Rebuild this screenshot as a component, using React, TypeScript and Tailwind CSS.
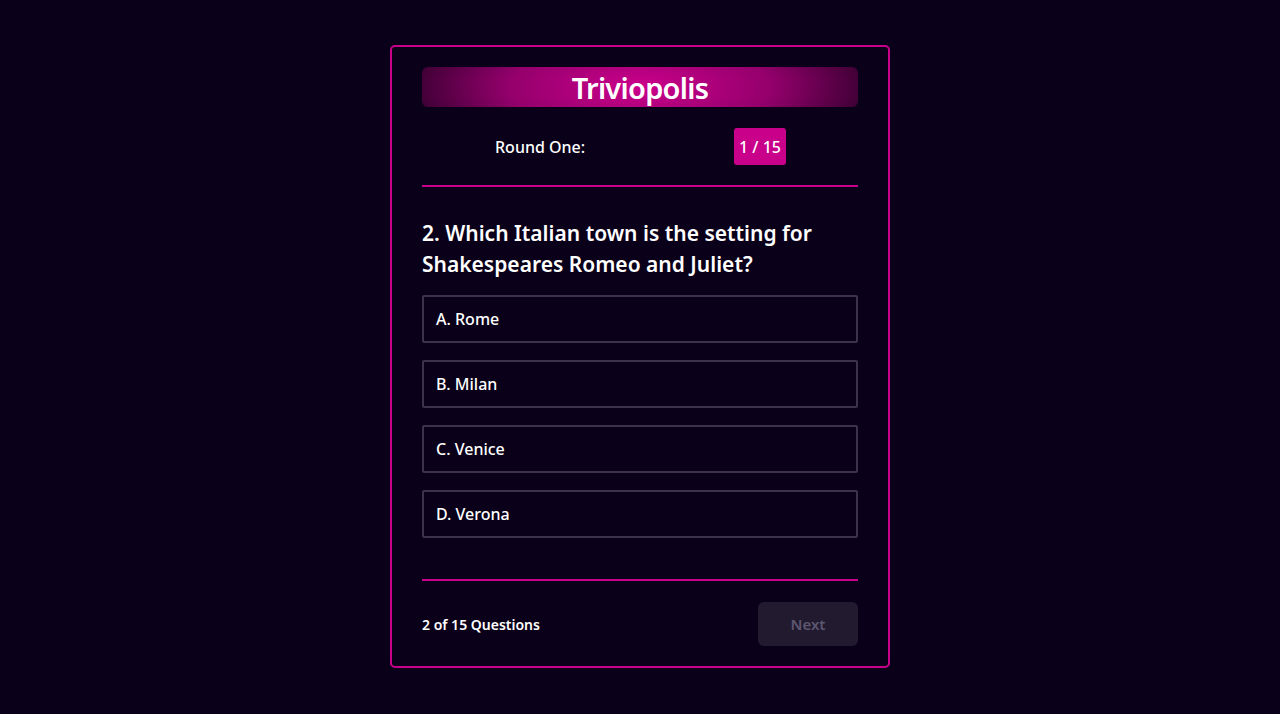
import React, { useState } from "react";

const options = ["A. Rome", "B. Milan", "C. Venice", "D. Verona"];

export default function App() {
  const [selected, setSelected] = useState<number | null>(null);

  return (
    <div
      className="min-h-screen w-full bg-[#0a0019] flex justify-center pt-[45px]"
      style={{ fontFamily: "'Noto Sans', Lato, sans-serif" }}
    >
      <div className="w-[500px] h-[623px] border-2 border-[#c8008a] rounded-[5px] px-[30px] pt-[20px] pb-[20px] flex flex-col">
        {/* Title banner */}
        <div className="h-[40px] rounded-[6px] flex items-center justify-center bg-[radial-gradient(ellipse_60%_220%_at_center,#cc008c_0%,#94006c_50%,#1e0020_100%)]">
          <h1 className="text-white text-[29px] font-semibold tracking-tight leading-none">Triviopolis</h1>
        </div>

        {/* Round info */}
        <div className="flex items-center h-[37px] mt-[21px]">
          <span className="ml-[73px] text-white text-[16px] font-medium">Round One:</span>
          <span className="ml-auto mr-[72px] h-[37px] w-[52px] rounded-[3px] bg-[#c8008a] text-white text-[16px] font-medium flex items-center justify-center">
            1 / 15
          </span>
        </div>

        <div className="h-[2px] bg-[#c8008a] mt-[20px]" />

        {/* Question */}
        <h2 className="text-white text-[21px] font-semibold leading-[31px] mt-[31px]">
          2. Which Italian town is the setting for Shakespeares Romeo and Juliet?
        </h2>

        <div className="flex flex-col gap-[17px] mt-[15px]">
          {options.map((o, i) => (
            <button
              key={o}
              onClick={() => setSelected(i)}
              className={`h-[48px] w-full text-left px-[12px] border-2 rounded-[2px] text-white text-[16px] font-medium ${
                selected === i ? "border-[#c8008a]" : "border-[#3a334b]"
              }`}
            >
              {o}
            </button>
          ))}
        </div>

        <div className="h-[2px] bg-[#c8008a] mt-[41px]" />

        {/* Footer */}
        <div className="flex items-center justify-between mt-[21px]">
          <span className="text-white text-[14px] font-semibold">2 of 15 Questions</span>
          <button className="w-[100px] h-[44px] rounded-[6px] bg-[#221a2f] text-[#5d5670] text-[15px] font-semibold">
            Next
          </button>
        </div>
      </div>
    </div>
  );
}
